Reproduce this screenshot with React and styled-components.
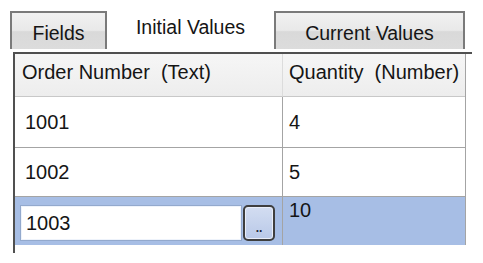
import React from 'react';
import styled, { createGlobalStyle } from 'styled-components';

const GlobalStyle = createGlobalStyle`
  body {
    margin: 0;
    background: #fff;
    font-family: "Liberation Sans", Arial, sans-serif;
    color: #151515;
  }
`;

const Page = styled.div`
  padding: 11px 0 0 10px;
`;

const TabStrip = styled.div`
  display: flex;
  height: 38px;
`;

const Tab = styled.div`
  box-sizing: border-box;
  width: ${(p) => p.$width}px;
  display: flex;
  justify-content: center;
  align-items: center;
  font-size: 19.5px;
  padding-top: ${(p) => (p.$active ? '0' : '4px')};
  padding-bottom: ${(p) => (p.$active ? '6px' : '0')};
  ${(p) =>
    p.$active
      ? `background: #fff;`
      : `
    border: 2px solid #7a7a7a;
    border-bottom: none;
    background: linear-gradient(#f1f1f1, #e9e9e9 48%, #d9d9d9 52%, #dcdcdc);
  `}
`;

const Frame = styled.div`
  box-sizing: border-box;
  margin: 3px 0 0 3px;
  width: 459px;
  height: 201px;
  border-top: 2px solid #505050;
  border-left: 2px solid #505050;
`;

const Grid = styled.div`
  box-sizing: border-box;
  width: 451px;
  display: grid;
  grid-template-columns: 268px 1fr;
  grid-template-rows: 43px 51px 49px 48px;
  border-right: 1px solid #a4a4a4;
  font-size: 20px;
`;

const HeaderCell = styled.div`
  box-sizing: border-box;
  display: flex;
  align-items: center;
  padding: 0 0 6px ${(p) => p.$pad}px;
  background: linear-gradient(#f6f6f6, #ededed);
  border-bottom: 1px solid #c8c8c8;
  border-right: ${(p) => (p.$first ? '1px solid #dcdcdc' : 'none')};
`;

const Cell = styled.div`
  box-sizing: border-box;
  display: flex;
  align-items: ${(p) => (p.$top ? 'flex-start' : 'center')};
  padding: ${(p) => (p.$top ? '2px' : '0')} 0 0 ${(p) => p.$pad}px;
  background: ${(p) => (p.$selected ? '#a7bee5' : '#fff')};
  border-bottom: ${(p) => (p.$last ? 'none' : '1px solid #a4a4a4')};
  border-right: ${(p) => (p.$first ? '1px solid #a4a4a4' : 'none')};
`;

const Editor = styled.div`
  display: flex;
  gap: 1px;
  padding: 6px 0 0 5px;
`;

const EditBox = styled.div`
  box-sizing: border-box;
  width: 222px;
  height: 36px;
  display: flex;
  align-items: center;
  padding-left: 5px;
  background: #fff;
  border: 1px solid #93a9cd;
  box-shadow: inset 0 0 0 1px #eef3fb;
`;

const DotsButton = styled.div`
  box-sizing: border-box;
  width: 32px;
  height: 36px;
  display: flex;
  justify-content: center;
  align-items: flex-end;
  padding-bottom: 5px;
  border: 2px solid #3e3e3e;
  border-radius: 5px;
  background: linear-gradient(#d3ddf1, #b9c9e8);
  box-shadow: inset 0 0 0 1px #e9eef9;
  font-size: 12px;
  font-weight: bold;
  line-height: 1;
  color: #1e2638;
`;

const rows = [
  { order: '1001', qty: '4' },
  { order: '1002', qty: '5' },
];

export default function App() {
  return (
    <Page>
      <GlobalStyle />
      <TabStrip>
        <Tab $width={97}>Fields</Tab>
        <Tab $width={167} $active>
          Initial Values
        </Tab>
        <Tab $width={191}>Current Values</Tab>
      </TabStrip>
      <Frame>
        <Grid>
          <HeaderCell $first $pad={7}>
            Order Number&nbsp; (Text)
          </HeaderCell>
          <HeaderCell $pad={6}>Quantity&nbsp; (Number)</HeaderCell>
          {rows.map((r) => (
            <React.Fragment key={r.order}>
              <Cell $first $pad={10}>
                {r.order}
              </Cell>
              <Cell $pad={6}>{r.qty}</Cell>
            </React.Fragment>
          ))}
          <Cell $first $selected $last $top $pad={0}>
            <Editor>
              <EditBox>1003</EditBox>
              <DotsButton>..</DotsButton>
            </Editor>
          </Cell>
          <Cell $selected $last $top $pad={6}>
            10
          </Cell>
        </Grid>
      </Frame>
    </Page>
  );
}
